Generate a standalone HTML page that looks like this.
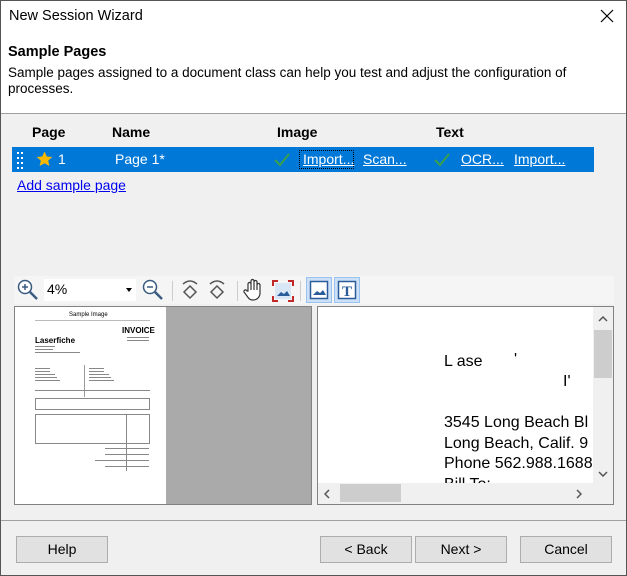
<!DOCTYPE html>
<html><head><style>
*{box-sizing:border-box;margin:0;padding:0}
body{width:627px;height:576px;overflow:hidden;font-family:"Liberation Sans",sans-serif;font-size:14px;color:#000;background:#f0f0f0;position:relative}
.a{position:absolute}
.win{left:0;top:0;width:627px;height:576px;border:1px solid #555;}
.btn{position:absolute;top:536px;height:27px;width:92px;background:#e1e1e1;border:1px solid #adadad;text-align:center;line-height:25px;font-size:14px}
.lk{color:#fff;text-decoration:underline}
.tiny{position:absolute;height:2px;background:#888}
</style></head><body>
<div class="a win"></div>
<div class="a" style="left:1px;top:1px;width:625px;height:112px;background:#fff"></div>
<div class="a" style="left:1px;top:113px;width:625px;height:1px;background:#a0a0a0"></div>
<div class="a" style="left:9px;top:8px;font-size:14.5px">New Session Wizard</div>
<svg class="a" style="left:600px;top:9px" width="14" height="14"><path d="M1 1L13 13M13 1L1 13" stroke="#000" stroke-width="1.2"/></svg>
<div class="a" style="left:8px;top:44px;font-weight:bold;font-size:14.5px">Sample Pages</div>
<div class="a" style="left:8px;top:65px;font-size:13.5px;line-height:16px;width:600px">Sample pages assigned to a document class can help you test and adjust the configuration of processes.</div>

<div class="a" style="left:32px;top:124px;font-weight:bold">Page</div>
<div class="a" style="left:112px;top:124px;font-weight:bold">Name</div>
<div class="a" style="left:277px;top:124px;font-weight:bold">Image</div>
<div class="a" style="left:436px;top:124px;font-weight:bold">Text</div>
<div class="a" style="left:12px;top:147px;width:582px;height:25px;background:#0078d7;color:#fff;font-size:14px">
 <svg class="a" style="left:4px;top:4px" width="8" height="18"><g fill="#fff"><rect x="1" y="1" width="2" height="2"/><rect x="5" y="1" width="2" height="2"/><rect x="1" y="6" width="2" height="2"/><rect x="5" y="6" width="2" height="2"/><rect x="1" y="11" width="2" height="2"/><rect x="5" y="11" width="2" height="2"/><rect x="1" y="16" width="2" height="2"/><rect x="5" y="16" width="2" height="2"/></g></svg>
 <svg class="a" style="left:24px;top:4px" width="17" height="16"><path d="M8.5 0.5L10.8 5.5 16.3 6 12.2 9.6 13.4 15 8.5 12.2 3.6 15 4.8 9.6 0.7 6 6.2 5.5Z" fill="#f8b800"/></svg>
 <div class="a" style="left:46px;top:4px">1</div>
 <div class="a" style="left:103px;top:4px">Page 1*</div>
 <svg class="a" style="left:262px;top:6px" width="16" height="14"><path d="M1 7L6 12 15 1" stroke="#3aa04a" stroke-width="2" fill="none"/></svg>
 <div class="a" style="left:287px;top:3px;width:55px;height:19px;border:1px dotted #000;"></div>
 <div class="a lk" style="left:291px;top:4px">Import...</div>
 <div class="a lk" style="left:351px;top:4px">Scan...</div>
 <svg class="a" style="left:422px;top:6px" width="16" height="14"><path d="M1 7L6 12 15 1" stroke="#3aa04a" stroke-width="2" fill="none"/></svg>
 <div class="a lk" style="left:449px;top:4px">OCR...</div>
 <div class="a lk" style="left:502px;top:4px">Import...</div>
</div>
<div class="a" style="left:17px;top:177px;color:#0000ee;text-decoration:underline">Add sample page</div>

<!-- toolbar -->
<div class="a" style="left:14px;top:276px;width:600px;height:28px;background:#f5f5f5"></div>
<svg class="a" style="left:17px;top:279px" width="22" height="22"><circle cx="8" cy="8" r="6.5" stroke="#3a5a80" stroke-width="1.5" fill="#fff"/><path d="M5 8h6M8 5v6" stroke="#3a5a80" stroke-width="1.5"/><path d="M13 13l7 7" stroke="#3a5a80" stroke-width="2.5"/></svg>
<div class="a" style="left:44px;top:279px;width:92px;height:22px;background:#fff"></div>
<div class="a" style="left:47px;top:281px">4%</div>
<svg class="a" style="left:126px;top:288px" width="7" height="4"><path d="M0 0h6L3 4z" fill="#000"/></svg>
<svg class="a" style="left:142px;top:279px" width="22" height="22"><circle cx="8" cy="8" r="6.5" stroke="#3a5a80" stroke-width="1.5" fill="#fff"/><path d="M5 8h6" stroke="#3a5a80" stroke-width="1.5"/><path d="M13 13l7 7" stroke="#3a5a80" stroke-width="2.5"/></svg>
<div class="a" style="left:172px;top:281px;width:1px;height:20px;background:#ccc"></div>
<svg class="a" style="left:180px;top:278px" width="20" height="24"><path d="M3 6Q10 0 17 6" stroke="#555" fill="none" stroke-width="1.5"/><path d="M10 8L16 14 10 20 4 14Z" stroke="#555" fill="none" stroke-width="1.5"/></svg>
<svg class="a" style="left:207px;top:278px" width="20" height="24"><path d="M3 6Q10 0 17 6" stroke="#555" fill="none" stroke-width="1.5"/><path d="M10 8L16 14 10 20 4 14Z" stroke="#555" fill="none" stroke-width="1.5"/></svg>
<div class="a" style="left:237px;top:281px;width:1px;height:20px;background:#ccc"></div>
<svg class="a" style="left:243px;top:278px" width="22" height="24"><path d="M5 13V6a1.5 1.5 0 0 1 3 0v6V3a1.5 1.5 0 0 1 3 0v9V4a1.5 1.5 0 0 1 3 0v8V7a1.5 1.5 0 0 1 3 0v8c0 4-3 7-7 7-3 0-4-1-6-4l-3-4a1.5 1.5 0 0 1 3-1z" stroke="#333" fill="#fff" stroke-width="1.2"/></svg>
<svg class="a" style="left:272px;top:280px" width="22" height="22"><rect x="3" y="3" width="16" height="16" fill="#d8e6f5"/><path d="M5 16l4-4 3 2 3-3 3 5z" fill="#2a5c9a"/><path d="M1 6V1h5M16 1h5v5M21 16v5h-5M6 21H1v-5" stroke="#c0282a" stroke-width="2" fill="none"/></svg>
<div class="a" style="left:300px;top:281px;width:1px;height:20px;background:#ccc"></div>
<div class="a" style="left:306px;top:277px;width:26px;height:26px;background:#cce0f7;border:1px solid #99c2ef"></div>
<svg class="a" style="left:309px;top:280px" width="20" height="20"><rect x="1.5" y="1.5" width="17" height="17" fill="#fff" stroke="#2a5c9a" stroke-width="1.5"/><path d="M4 15l4-4 3 2 3-3 3 5z" fill="#2a5c9a"/></svg>
<div class="a" style="left:334px;top:277px;width:26px;height:26px;background:#cce0f7;border:1px solid #99c2ef"></div>
<svg class="a" style="left:337px;top:280px" width="20" height="20"><rect x="1.5" y="1.5" width="17" height="17" fill="#fff" stroke="#2a5c9a" stroke-width="1.5"/><text x="10" y="16" text-anchor="middle" font-family="Liberation Serif" font-weight="bold" font-size="15" fill="#2a5c9a">T</text></svg>

<!-- left pane -->
<div class="a" style="left:14px;top:306px;width:298px;height:199px;border:1px solid #828282;background:#aaa"></div>
<div class="a" style="left:15px;top:307px;width:151px;height:197px;background:#fff;font-size:5px">
 <div class="a" style="left:54px;top:5px;font-size:6px">Sample Image</div>
 <div class="tiny" style="left:20px;top:13px;width:115px;height:1px;background:#bbb"></div>
 <div class="a" style="left:107px;top:19px;font-size:8px;font-weight:bold">INVOICE</div>
 <div class="a" style="left:20px;top:29px;font-size:8px;font-weight:bold">Laserfiche</div>
 <div class="tiny" style="left:112px;top:30px;width:22px;height:1px"></div><div class="tiny" style="left:112px;top:33px;width:22px;height:1px"></div>
 <div class="tiny" style="left:20px;top:39px;width:20px;height:1px"></div><div class="tiny" style="left:20px;top:42px;width:18px;height:1px"></div><div class="tiny" style="left:20px;top:45px;width:45px;height:1px"></div>
 <div class="tiny" style="left:20px;top:61px;width:15px;height:1px"></div><div class="tiny" style="left:20px;top:64px;width:15px;height:1px"></div><div class="tiny" style="left:20px;top:67px;width:20px;height:1px"></div><div class="tiny" style="left:20px;top:70px;width:22px;height:1px"></div><div class="tiny" style="left:20px;top:73px;width:25px;height:1px"></div>
 <div class="tiny" style="left:69px;top:58px;width:1px;height:32px;background:#999"></div>
 <div class="tiny" style="left:74px;top:61px;width:15px;height:1px"></div><div class="tiny" style="left:74px;top:64px;width:15px;height:1px"></div><div class="tiny" style="left:74px;top:67px;width:20px;height:1px"></div><div class="tiny" style="left:74px;top:70px;width:22px;height:1px"></div><div class="tiny" style="left:74px;top:73px;width:25px;height:1px"></div>
 <div class="tiny" style="left:20px;top:83px;width:115px;height:1px"></div>
 <div class="a" style="left:20px;top:91px;width:115px;height:12px;border:1px solid #888"></div>
 <div class="a" style="left:20px;top:107px;width:115px;height:30px;border:1px solid #888"></div>
 <div class="a" style="left:111px;top:107px;width:1px;height:57px;background:#888"></div>
 <div class="tiny" style="left:90px;top:141px;width:44px;height:1px"></div><div class="tiny" style="left:90px;top:147px;width:44px;height:1px"></div><div class="tiny" style="left:80px;top:153px;width:54px;height:1px"></div><div class="tiny" style="left:90px;top:159px;width:44px;height:1px"></div>
</div>

<!-- right pane -->
<div class="a" style="left:317px;top:306px;width:297px;height:199px;border:1px solid #828282;background:#fff;overflow:hidden">
 <div class="a" style="left:126px;top:46px;font-size:16px">L ase</div>
 <div class="a" style="left:196px;top:44px;font-size:16px">'</div>
 <div class="a" style="left:245px;top:66px;font-size:16px">I'</div>
 <div class="a" style="left:126px;top:106px;font-size:16px;line-height:20.5px;white-space:nowrap">3545 Long Beach Bl<br>Long Beach, Calif. 9<br>Phone 562.988.1688<br>Bill To:</div>
 <div class="a" style="left:275px;top:0;width:20px;height:197px;background:#f0f0f0"></div>
 <div class="a" style="left:276px;top:23px;width:18px;height:48px;background:#cdcdcd"></div>
 <div class="a" style="left:0;top:176px;width:295px;height:21px;background:#f0f0f0"></div>
 <div class="a" style="left:22px;top:177px;width:61px;height:18px;background:#cdcdcd"></div>
 <svg class="a" style="left:280px;top:9px" width="10" height="6"><path d="M1 5L5 1 9 5" stroke="#555" stroke-width="1.5" fill="none"/></svg>
 <svg class="a" style="left:280px;top:164px" width="10" height="6"><path d="M1 1L5 5 9 1" stroke="#555" stroke-width="1.5" fill="none"/></svg>
 <svg class="a" style="left:6px;top:182px" width="6" height="10"><path d="M5 1L1 5 5 9" stroke="#555" stroke-width="1.5" fill="none"/></svg>
 <svg class="a" style="left:258px;top:182px" width="6" height="10"><path d="M1 1L5 5 1 9" stroke="#555" stroke-width="1.5" fill="none"/></svg>
</div>

<div class="a" style="left:1px;top:520px;width:625px;height:1px;background:#a0a0a0"></div>
<div class="btn" style="left:16px">Help</div>
<div class="btn" style="left:320px">&lt; Back</div>
<div class="btn" style="left:415px">Next &gt;</div>
<div class="btn" style="left:520px">Cancel</div>
</body></html>
